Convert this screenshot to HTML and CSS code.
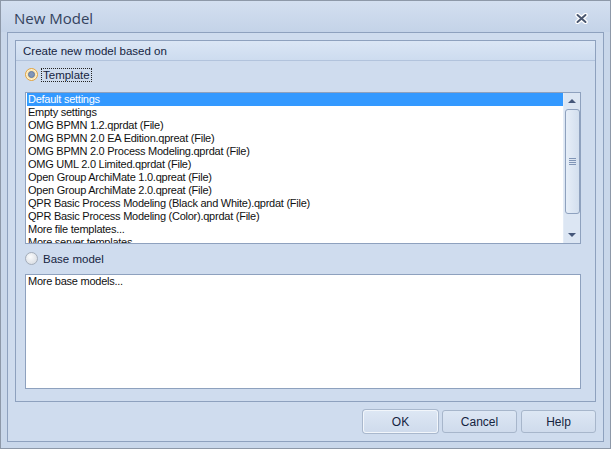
FILE: index.html
```html
<!DOCTYPE html>
<html lang="en-US">
<head>
<meta charset="utf-8">
<title>New Model</title>
<link rel="stylesheet" href="styles.css">
</head>
<body>
<div class="window">

  <div class="titlebar">
    <span class="title">New Model</span>
    <span class="close">
      <svg width="13" height="11" viewBox="0 0 13 11">
        <path d="M2.5 2 L10.5 9 M10.5 2 L2.5 9" stroke="#ffffff" stroke-width="4.5" stroke-linecap="round"/>
        <path d="M2.5 2 L10.5 9 M10.5 2 L2.5 9" stroke="#4a5770" stroke-width="2" stroke-linecap="round"/>
      </svg>
    </span>
  </div>

  <div class="frame">
    <div class="group">
      <div class="group-head">Create new model based on</div>

      <div class="group-body">
        <div class="option">
          <span class="radio radio-on"><span class="dot"></span></span>
          <span class="label focus">Template</span>
        </div>

        <div class="listbox">
          <ul class="items">
            <li class="selected">Default settings</li>
            <li>Empty settings</li>
            <li>OMG BPMN 1.2.qprdat (File)</li>
            <li>OMG BPMN 2.0 EA Edition.qpreat (File)</li>
            <li>OMG BPMN 2.0 Process Modeling.qprdat (File)</li>
            <li>OMG UML 2.0 Limited.qprdat (File)</li>
            <li>Open Group ArchiMate 1.0.qpreat (File)</li>
            <li>Open Group ArchiMate 2.0.qpreat (File)</li>
            <li>QPR Basic Process Modeling (Black and White).qprdat (File)</li>
            <li>QPR Basic Process Modeling (Color).qprdat (File)</li>
            <li>More file templates...</li>
            <li>More server templates...</li>
          </ul>
          <div class="scrollbar">
            <span class="arrow arrow-up"></span>
            <span class="thumb"><span class="grip"></span></span>
            <span class="arrow arrow-down"></span>
          </div>
        </div>

        <div class="option option-base">
          <span class="radio"></span>
          <span class="label">Base model</span>
        </div>

        <div class="listbox listbox-base">
          <ul class="items">
            <li>More base models...</li>
          </ul>
        </div>
      </div>
    </div>

    <div class="buttons">
      <button class="btn btn-default">OK</button>
      <button class="btn">Cancel</button>
      <button class="btn">Help</button>
    </div>
  </div>

</div>
</body>
</html>
```

FILE: styles.css
```css
body {
  margin: 0;
  font-family: "Liberation Sans", Arial, sans-serif;
  font-size: 11px;
  color: #000;
}
.window {
  width: 609px;
  height: 447px;
  border: 1px solid #8d98a8;
  background: #c9d7ea;
  display: flex;
  flex-direction: column;
}
.titlebar {
  height: 31px;
  display: flex;
  align-items: center;
  justify-content: space-between;
  padding: 0 22px 0 13px;
  background: linear-gradient(#d3dff0, #c4d3e8);
}
.title {
  font-family: "Open Sans", sans-serif;
  font-size: 15px;
  color: #34435e;
  padding-top: 2px;
}
.close {
  display: flex;
  padding-top: 3px;
}
.frame {
  flex: 1;
  margin: 0 6px 6px;
  border: 1px solid #8ea1be;
  background: #cfdcee;
  padding: 7px 7px 0;
  display: flex;
  flex-direction: column;
}
.group {
  height: 360px;
  border: 1px solid #8ea1be;
  display: flex;
  flex-direction: column;
}
.group-head {
  height: 19px;
  line-height: 20px;
  padding-left: 7px;
  font-size: 11.5px;
  color: #15243f;
  background: linear-gradient(#dbe6f5, #cddcef);
  border-bottom: 1px solid #b2c3dc;
}
.group-body {
  padding: 6px 14px 0 9px;
}
.option {
  display: flex;
  align-items: center;
  height: 15px;
  margin-bottom: 10px;
}
.option-base {
  margin: 7px 0 8px;
}
.radio {
  width: 11px;
  height: 11px;
  border-radius: 50%;
  border: 1px solid #a4adba;
  background: radial-gradient(circle at 40% 35%, #fafbfc, #d2d7de);
  margin: 0 4px 0 0;
  display: flex;
  align-items: center;
  justify-content: center;
}
.radio-on {
  border-color: #e2a341;
  background: #fbe3a6;
  box-shadow: inset 0 0 0 1px #fdf3d8;
}
.dot {
  width: 5px;
  height: 5px;
  border-radius: 50%;
  background: #8096b8;
  border: 1px solid #5f7aa5;
}
.label {
  font-size: 11.5px;
  color: #15243f;
  padding: 0 1px;
}
.focus {
  outline: 1px dotted #222;
}
.listbox {
  height: 150px;
  border: 1px solid #8ea1be;
  background: #fff;
  display: flex;
  overflow: hidden;
}
.listbox-base {
  height: 113px;
}
.items {
  flex: 1;
  list-style: none;
  margin: 0;
  padding: 0 0 0 1px;
  font-size: 11px;
  letter-spacing: -0.25px;
  color: #111;
}
.items li {
  height: 13px;
  line-height: 13px;
  padding-left: 1px;
  white-space: nowrap;
}
.items li.selected {
  background: #3399ff;
  color: #fff;
}
.scrollbar {
  width: 16px;
  background: #dce6f3;
  border-left: 1px solid #e4ecf6;
  display: flex;
  flex-direction: column;
  align-items: center;
}
.arrow {
  width: 0;
  height: 0;
  border-left: 4px solid transparent;
  border-right: 4px solid transparent;
  margin: 6px 0;
}
.arrow-up {
  border-bottom: 4px solid #45577a;
}
.arrow-down {
  border-top: 4px solid #45577a;
  margin-top: auto;
}
.thumb {
  width: 13px;
  height: 103px;
  border: 1px solid #8ea1be;
  border-radius: 3px;
  background: linear-gradient(90deg, #e6eef8, #d3dfee);
  display: flex;
  align-items: center;
  justify-content: center;
}
.grip {
  width: 7px;
  height: 7px;
  background: repeating-linear-gradient(#8095b6 0 1px, transparent 1px 2px);
}
.buttons {
  display: flex;
  justify-content: flex-end;
  gap: 4px;
  padding-top: 8px;
}
.btn {
  width: 75px;
  height: 23px;
  border: 1px solid #a7b6cb;
  border-radius: 3px;
  background: linear-gradient(#dde7f4, #cfdbec);
  font-family: "Liberation Sans", Arial, sans-serif;
  font-size: 12px;
  color: #15243f;
  padding: 0;
}
.btn-default {
  border-color: #f2f6fb;
  box-shadow: 0 0 0 1px #a9b8cd;
}
```
